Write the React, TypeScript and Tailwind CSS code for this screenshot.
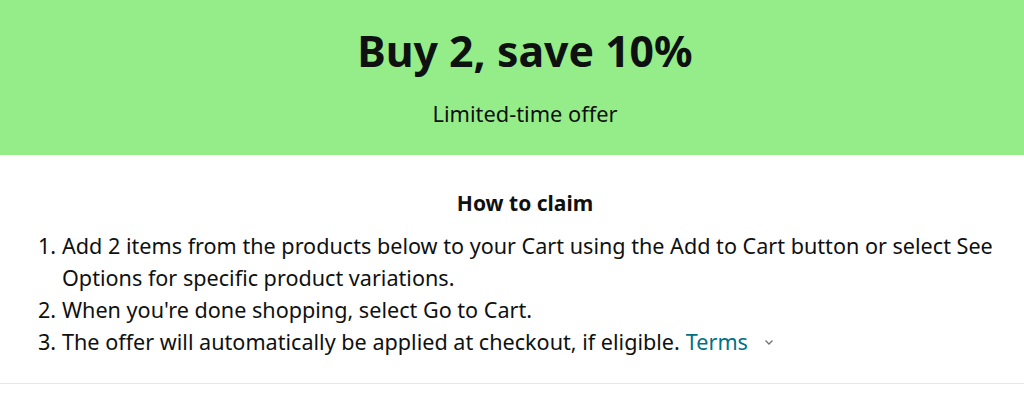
import React from "react";

const steps = [
  "Add 2 items from the products below to your Cart using the Add to Cart button or select See Options for specific product variations.",
  "When you're done shopping, select Go to Cart.",
];

export default function App() {
  return (
    <div
      className="w-[1024px] h-[404px] bg-white text-[#0f1111]"
      style={{ fontFamily: '"Noto Sans", "Open Sans", sans-serif' }}
    >
      <div className="h-[155px] bg-[#95ed8a] flex flex-col items-center pt-[20px] pl-[26px]">
        <h1 className="text-[42.8px] leading-[62px] font-bold">Buy 2, save 10%</h1>
        <p className="text-[21.8px] leading-[30px] mt-[17px]">Limited-time offer</p>
      </div>
      <div className="pt-[31px] pb-[25px] border-b border-[#e7e7e7]">
        <h2 className="text-center text-[21px] leading-[34px] font-bold pl-[26px]">How to claim</h2>
        <ol className="mt-[10px] pl-[38px] pr-[16px] text-[21.6px] leading-[32px]">
          {steps.map((s, i) => (
            <li key={i} className="flex">
              <span className="w-[24px] shrink-0">{i + 1}.</span>
              <span>{s}</span>
            </li>
          ))}
          <li className="flex">
            <span className="w-[24px] shrink-0">3.</span>
            <span className="flex items-center">
              The offer will automatically be applied at checkout, if eligible.
              <a className="ml-[6px] text-[#007185]">Terms</a>
              <svg className="ml-[15px] w-[12px] h-[12px]" viewBox="0 0 12 12" fill="none" stroke="#6f7373" strokeWidth="1.3">
                <path d="M2.5 4.5 L6 8 L9.5 4.5" />
              </svg>
            </span>
          </li>
        </ol>
      </div>
    </div>
  );
}
